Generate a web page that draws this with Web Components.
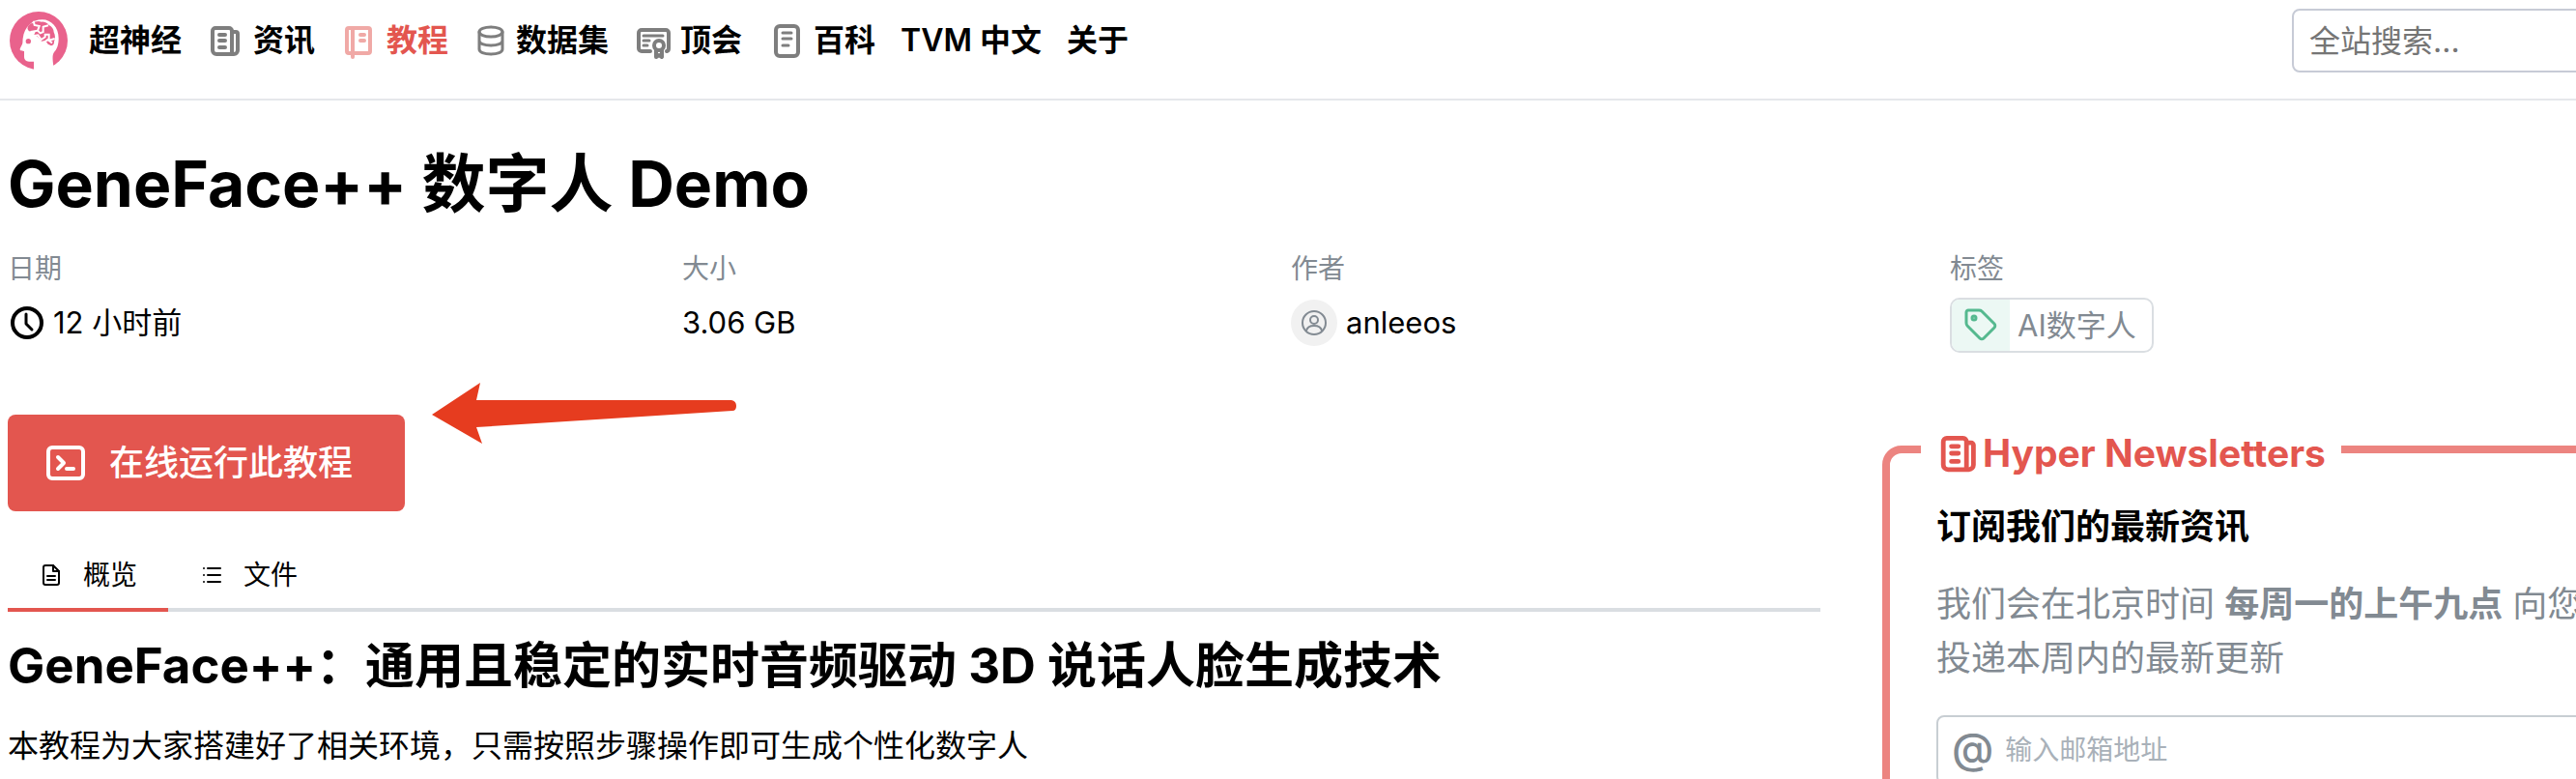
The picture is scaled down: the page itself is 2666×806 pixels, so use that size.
<!DOCTYPE html>
<html lang="zh-CN">
<head>
<meta charset="utf-8">
<title>GeneFace++ 数字人 Demo</title>
<style>
    html {
        overflow: hidden;
    }

    body {
        margin: 0;
        background: white;
        color: black;
        font: 32px/48px Inter, "Noto Sans CJK SC", sans-serif;

        --red: #e3564f;
        --gray: #828a92;
        --line: #dadee2;
    }
</style>
</head>
<body>
<tutorial-page></tutorial-page>

<script>
/*
Attributes:
  - name: one of the keys of ICONS
  - height: optional height in pixels, the width follows

Usage:
    <line-icon name="clock"></line-icon>
 */
const ICONS = {
    news: [40, 40, 4, `<path d="M26 33V10a3 3 0 0 0-3-3H9a3 3 0 0 0-3 3v20a4 4 0 0 0 4 4h18a4 4 0 0 0 4-4V13a2 2 0 0 0-2-2h-4"/><path d="M13 14h6M13 20h6M13 27h6"/>`],
    book: [40, 40, 4, `<rect x="7" y="7" width="24" height="26" rx="2"/><path d="M13 7v30M21 14h4M21 20h4"/>`],
    database: [36, 40, 3, `<ellipse cx="18" cy="11" rx="12" ry="5"/><path d="M6 11v18c0 3 5 5 12 5s12-2 12-5V11M6 20c0 3 5 5 12 5s12-2 12-5"/>`],
    award: [40, 40, 4, `<path d="M17 31H8a3 3 0 0 1-3-3V12a3 3 0 0 1 3-3h25a3 3 0 0 1 3 3v16a3 3 0 0 1-2 3"/><path stroke-width="3" d="M10 15h20M10 20h6M10 25h4"/><circle cx="26" cy="25" r="5"/><path d="M23 30v7l3-2 3 2v-7"/>`],
    page: [40, 40, 4, `<rect x="9" y="5" width="23" height="31" rx="4"/><path stroke-width="3" d="M16 12h9M16 18h9M16 25h6"/>`],
    clock: [38, 36, 4, `<circle cx="20" cy="18" r="15"/><path stroke-width="3" d="M19 9v10l6 6"/>`],
    user: [28, 28, 2, `<circle cx="14" cy="14" r="12"/><circle cx="14" cy="11" r="4"/><path d="M6 22c1-4 4-5 8-5s7 1 8 5"/>`],
    tag: [36, 36, 3, `<path d="M3 5v11c0 1 0 2 1 3l13 13c1 1 3 1 4 0l11-11c1-1 1-3 0-4L19 4c-1-1-2-1-3-1H5c-1 0-2 1-2 2z"/><circle cx="11" cy="11" r="2"/>`],
    terminal: [40, 40, 4, `<rect x="2" y="4" width="36" height="32" rx="4"/><path d="M12 14l6 6-6 6M21 26h7"/>`],
    file: [26, 26, 2, `<path d="M5 5a2 2 0 0 1 2-2h8l6 6v12a2 2 0 0 1-2 2H7a2 2 0 0 1-2-2z"/><path d="M15 3v6h6M9 14h8M9 18h8"/>`],
    list: [26, 26, 2, `<path d="M9 6h13M9 13h13M9 20h13M5 6h0M5 13h0M5 20h0"/>`]
};

window.customElements.define("line-icon", class extends HTMLElement {

    connectedCallback() {
        const [width, height, stroke, shapes] = ICONS[this.getAttribute("name")];
        const drawn = parseInt(this.getAttribute("height")) || height;
        this.attachShadow({ mode: "open" });
        this.shadowRoot.innerHTML = `
            <style>
                :host { display: inline-flex; flex: none; }
                svg { display: block; fill: none; stroke: currentColor; stroke-linecap: round; stroke-linejoin: round; }
            </style>
            <svg height="${drawn}" viewBox="0 0 ${width} ${height}" stroke-width="${stroke}" aria-hidden="true">${shapes}</svg>
        `;
    }
});

// Base for the elements whose markup is a fixed template
class TemplateElement extends HTMLElement {
    constructor() {
        super();
        this.attachShadow({ mode: "open" });
        this.shadowRoot.innerHTML = this.template;
    }
}

window.customElements.define("brand-logo", class extends TemplateElement {
    get template() {
        return `
            <style>
                :host { display: block; flex: none; }
                svg { display: block; }
            </style>
            <svg width="60" height="60" viewBox="30 13 180 180" aria-hidden="true">
                <circle cx="120" cy="103" r="90" fill="#e9628c"/>
                <path fill="white" d="M105 196v-28H90c-10 0-15-6-15-14v-18l-9-2c-4-1-5-4-3-8l6-12c2-5 1-12 2-18 5-36 29-58 60-58 29 0 51 24 51 58 0 20-5 33-14 43-6 8-5 22-2 43l-5 14z"/>
                <path fill="#e9628c" d="M86 62c2-8 9-13 16-13 7-7 19-8 27-4 9-1 18 3 23 10 9 4 15 13 15 22 5 9 5 22 1 29 1 7-3 12-9 13l-10-5-8-11-12 2-9-12-14-8 4-10-20-1c-3-4-6-8-4-12z"/>
                <path fill="none" stroke="white" stroke-width="6" d="M104 42l3 13 15 3-5 14-22 4M117 72l8 8 9-4v-16l16-4M106 88l12-2 10 14 12-8v-8h12v18l18-5M136 110l12-10 14 10"/>
                <circle cx="88" cy="105" r="8" fill="#e9628c"/>
            </svg>
        `;
    }
});

/*
Attributes:
  - icon: optional name of the icon in front of the title
  - active: present on the current section
 */
window.customElements.define("nav-item", class extends HTMLElement {
    connectedCallback() {
        const icon = this.getAttribute("icon");
        this.attachShadow({ mode: "open" });
        this.shadowRoot.innerHTML = `
            <style>
                :host { display: block; }
                a {
                    display: flex;
                    align-items: center;
                    gap: 8px;
                    color: inherit;
                    font-weight: 600;
                    text-decoration: none;
                    white-space: nowrap;
                }
                line-icon { opacity: 0.5; }
                :host([active]) { color: var(--red); }
            </style>
            <a href="#">${icon ? `<line-icon name="${icon}"></line-icon>` : ""}<span><slot></slot></span></a>
        `;
    }
});

window.customElements.define("site-header", class extends TemplateElement {
    get template() {
        return `
            <style>
                :host { display: block; }
                header {
                    display: flex;
                    align-items: center;
                    justify-content: space-between;
                    padding: 9px 8px 27px 10px;
                    border-bottom: 2px solid #e5e7eb;
                }
                nav { display: flex; align-items: center; gap: 26px; }
                .home { display: flex; align-items: center; gap: 22px; }
                input {
                    box-sizing: border-box;
                    width: 366px;
                    height: 66px;
                    padding: 0 16px;
                    border: 2px solid #c7cbd6;
                    border-radius: 8px;
                    background: white;
                    font: inherit;
                }
                input::placeholder { color: #757575; }
            </style>
            <header>
                <nav>
                    <div class="home"><brand-logo></brand-logo><nav-item>超神经</nav-item></div>
                    <nav-item icon="news">资讯</nav-item>
                    <nav-item icon="book" active>教程</nav-item>
                    <nav-item icon="database">数据集</nav-item>
                    <nav-item icon="award">顶会</nav-item>
                    <nav-item icon="page">百科</nav-item>
                    <nav-item>TVM 中文</nav-item>
                    <nav-item>关于</nav-item>
                </nav>
                <input type="search" placeholder="全站搜索..." aria-label="全站搜索">
            </header>
        `;
    }
});

window.customElements.define("meta-field", class extends HTMLElement {
    connectedCallback() {
        this.attachShadow({ mode: "open" });
        this.shadowRoot.innerHTML = `
            <style>
                :host { display: block; }
                .label { color: var(--gray); font-size: 28px; line-height: 40px; }
                .value { display: flex; align-items: center; gap: 9px; height: 56px; margin-top: 8px; font-size: 31px; }
            </style>
            <div class="label">${this.getAttribute("label")}</div>
            <div class="value"><slot></slot></div>
        `;
    }
});

window.customElements.define("user-avatar", class extends TemplateElement {
    get template() {
        return `
            <style>
                :host {
                    display: flex;
                    align-items: center;
                    justify-content: center;
                    width: 48px;
                    height: 48px;
                    border-radius: 50%;
                    background: #f1f1f1;
                    color: var(--gray);
                }
            </style>
            <line-icon name="user"></line-icon>
        `;
    }
});

window.customElements.define("tag-chip", class extends TemplateElement {
    get template() {
        return `
            <style>
                :host { display: block; padding-top: 4px; }
                a {
                    display: flex;
                    border: 2px solid var(--line);
                    border-radius: 10px;
                    overflow: hidden;
                    color: var(--gray);
                    line-height: 53px;
                    text-decoration: none;
                }
                .icon { display: flex; align-items: center; padding: 0 12px; background: #ecf8f4; color: #55b98f; }
                .text { padding: 0 16px 0 8px; }
            </style>
            <a href="#"><span class="icon"><line-icon name="tag"></line-icon></span><span class="text"><slot></slot></span></a>
        `;
    }
});

window.customElements.define("run-button", class extends TemplateElement {
    get template() {
        return `
            <style>
                :host { display: block; }
                button {
                    display: flex;
                    align-items: center;
                    gap: 25px;
                    height: 100px;
                    padding: 0 54px 0 40px;
                    border: 0;
                    border-radius: 8px;
                    background: var(--red);
                    color: white;
                    font: inherit;
                    font-size: 36px;
                    font-weight: 500;
                }
            </style>
            <button type="button"><line-icon name="terminal"></line-icon><span><slot></slot></span></button>
        `;
    }
});

window.customElements.define("hint-arrow", class extends TemplateElement {
    get template() {
        return `
            <style>
                :host { display: block; }
                svg { display: block; }
            </style>
            <svg width="316" height="66" viewBox="0 0 316 66" aria-hidden="true">
                <path fill="#e63c1f" d="M0 34L50 1l-4 18h264q5 1 5 6 0 5-4 5L46 47l6 17z"/>
            </svg>
        `;
    }
});

/*
Attributes:
  - tabs: comma-separated list of icon:title
  - selected: the current selected index
 */
window.customElements.define("tab-bar", class extends HTMLElement {
    static get observedAttributes() {
        return ["tabs", "selected"];
    }

    constructor() {
        super();
        this.attachShadow({ mode: "open" });
        this.shadowRoot.innerHTML = `
            <style>
                :host { display: block; }
                .tabs { display: flex; box-shadow: inset 0 -4px var(--line); }
                button {
                    display: flex;
                    align-items: center;
                    gap: 20px;
                    height: 72px;
                    padding: 0 32px;
                    border: 0;
                    border-bottom: 4px solid transparent;
                    background: none;
                    color: inherit;
                    font: inherit;
                    font-size: 28px;
                }
                button[aria-selected="true"] { border-color: var(--red); }
            </style>
            <div class="tabs" role="tablist"></div>
        `;
    }

    attributeChangedCallback() {
        const selected = parseInt(this.getAttribute("selected"));
        const buttons = (this.getAttribute("tabs") || "").split(",").map((tab, i) => {
            const [icon, title] = tab.split(":");
            const button = document.createElement("button");
            button.type = "button";
            button.setAttribute("role", "tab");
            button.setAttribute("aria-selected", String(i === selected));
            button.innerHTML = `<line-icon name="${icon}"></line-icon><span>${title}</span>`;
            button.addEventListener("click", () => this.setAttribute("selected", i.toString()));
            return button;
        });
        this.shadowRoot.querySelector(".tabs").replaceChildren(...buttons);
    }
});

window.customElements.define("newsletter-box", class extends TemplateElement {
    get template() {
        return `
            <style>
                :host { display: block; }
                fieldset {
                    min-width: 0;
                    margin: 0;
                    padding: 0 48px 48px;
                    border: 8px solid #ec8480;
                    border-radius: 20px;
                }
                legend {
                    margin-left: -16px;
                    padding: 8px 16px 0;
                    color: var(--red);
                    font-size: 39px;
                    font-weight: 700;
                }
                .legend { display: flex; align-items: center; }
                h3 { margin: 28px 0; font-size: 36px; line-height: 48px; font-weight: 600; }
                p { margin: 0 0 31px; color: var(--gray); font-size: 36px; line-height: 56px; }
                label {
                    display: flex;
                    align-items: center;
                    gap: 12px;
                    height: 68px;
                    padding: 0 14px;
                    border: 2px solid #c8ced3;
                    border-radius: 8px;
                    color: var(--gray);
                }
                .at { font-size: 44px; font-weight: 500; line-height: 40px; padding-bottom: 4px; }
                input { flex: 1; min-width: 0; padding: 0; border: 0; outline: 0; background: none; font: inherit; font-size: 28px; }
                input::placeholder { color: #a9b1b9; }
            </style>
            <fieldset>
                <legend><span class="legend"><line-icon name="news" height="48"></line-icon>Hyper Newsletters</span></legend>
                <h3>订阅我们的最新资讯</h3>
                <p>我们会在北京时间 <b>每周一的上午九点</b> 向您投递本周内的最新更新</p>
                <label><span class="at">@</span><input type="email" placeholder="输入邮箱地址"></label>
            </fieldset>
        `;
    }
});

window.customElements.define("tutorial-page", class extends TemplateElement {
    get template() {
        return `
            <style>
                /* The layout is a little wider than the window */
                :host { display: block; width: calc(100% + 80px); }
                main { padding: 0 0 0 8px; }
                h1 { margin: 46px 0 28px; font-size: 66px; line-height: 80px; font-weight: 700; }
                .meta { display: grid; grid-template-columns: 698fr 630fr 682fr 728fr; }
                .content { display: grid; grid-template-columns: minmax(0, 1fr) 798px; gap: 64px; margin-top: 67px; }
                .run { display: flex; align-items: flex-start; gap: 28px; margin-bottom: 32px; }
                hint-arrow { margin-top: -34px; }
                newsletter-box { margin-top: 8px; }
                h2 { margin: 24px 0 27px; font-size: 51px; line-height: 64px; font-weight: 700; }
                p { margin: 0; }
            </style>
            <site-header></site-header>
            <main>
                <h1>GeneFace++ 数字人 Demo</h1>
                <div class="meta">
                    <meta-field label="日期"><line-icon name="clock"></line-icon><span>12 小时前</span></meta-field>
                    <meta-field label="大小">3.06 GB</meta-field>
                    <meta-field label="作者"><user-avatar></user-avatar><span>anleeos</span></meta-field>
                    <meta-field label="标签"><tag-chip>AI数字人</tag-chip></meta-field>
                </div>
                <div class="content">
                    <article>
                        <div class="run">
                            <run-button>在线运行此教程</run-button>
                            <hint-arrow></hint-arrow>
                        </div>
                        <tab-bar tabs="file:概览,list:文件" selected="0"></tab-bar>
                        <h2>GeneFace++：通用且稳定的实时音频驱动 3D 说话人脸生成技术</h2>
                        <p>本教程为大家搭建好了相关环境，只需按照步骤操作即可生成个性化数字人</p>
                    </article>
                    <newsletter-box></newsletter-box>
                </div>
            </main>
        `;
    }
});
</script>
</body>
</html>
